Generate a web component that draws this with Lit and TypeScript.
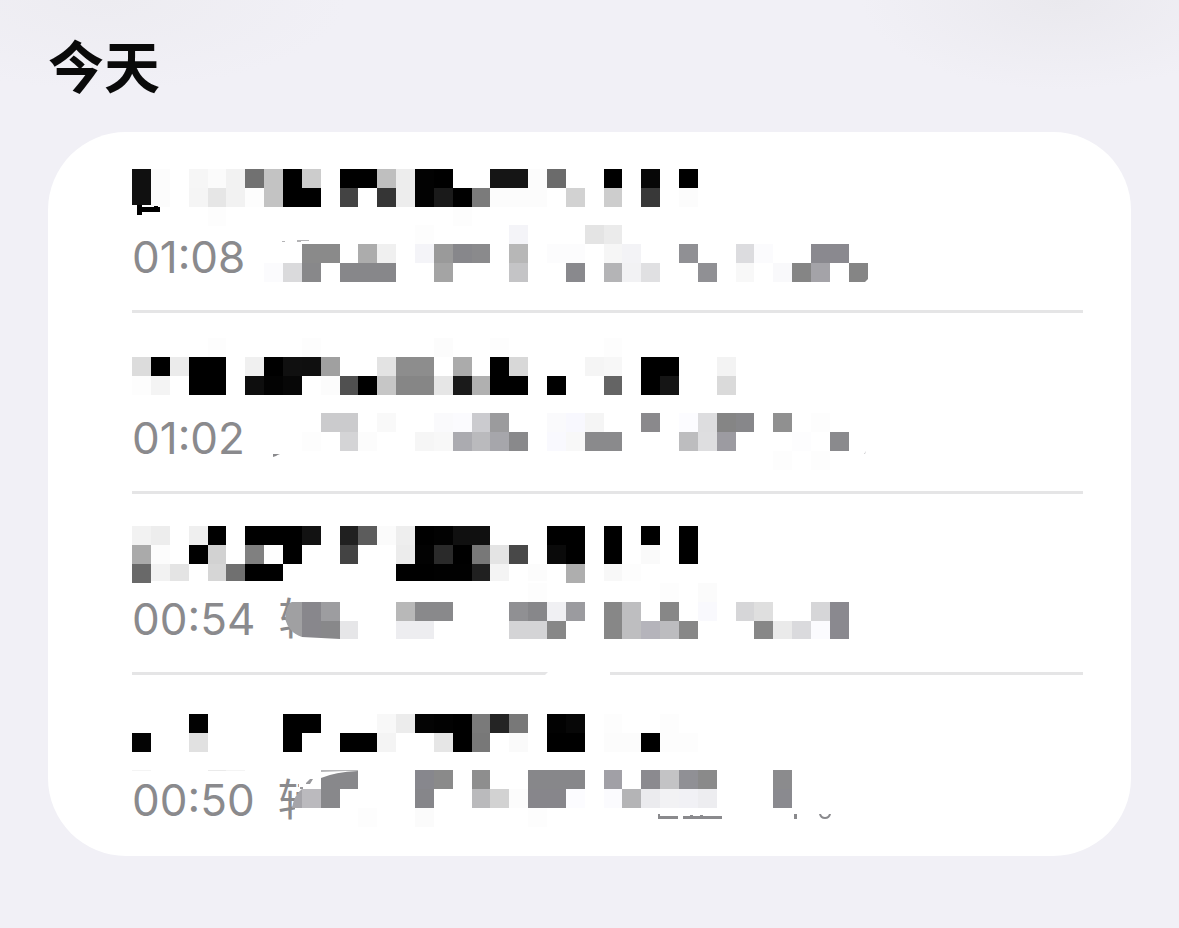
import { LitElement, html, svg, css } from "lit";
import { customElement, property } from "lit/decorators.js";

/** One horizontal strip of pixelated cells: "column:colour", or "first-last:colour". */
interface Band {
  y: number;
  h?: number;
  cells: string;
}

interface Shape {
  d: string;
  fill: string;
}

interface Entry {
  time: string;
  source?: string;
  bands: Band[];
  under?: Shape[];
  over?: Shape[];
}

const GREY = "#8a8a8d";

const entries: Entry[] = [
  {
    time: "01:08",
    bands: [
      { y: 37, cells: "0:10 1:fc 3:f6 4:fb 5:f2 6:71 7:c3 8:00 9:cc 11-12:00 13:bf 14:ed 15:02 16:00 19-20:15 21:fc 22:6b 25:00 27:07 29:00" },
      { y: 56, cells: "0:10 1:fc 3:f5 4:e6 5:f2 6:fd 7:c3 8-9:00 11:43 13:35 14:ed 15:02 16:1a 17:00 18:7b 19-21:fc 23:d2 25:cd 27:38 29:fc" },
      { y: 75, cells: "4:fd 17:fd" },
      { y: 93, cells: "15:fd 20:f4f4f8 24:e4 25:eb" },
      { y: 112, cells: "9-10:8a 12:ac 13:f0 15:f4f4f8 16:9a 17:87878b 18:8a8a8c 20:b7 22-23:fcfcfd 25:f6 26:f3f3f6 29:909094 32:dcdcdf 33:fbfbfd 36-37:8a898f" },
      { y: 131, cells: "7:fbfbfd 8:dadadc 9:88888a 11-13:87878a 16:a4 20:c4c4c6 23:89898d 25:b4b4b6 26:f2f2f4 27:e0e0e2 30:909094 32:f8 34:f9f9fb 35:85 36:a4a3a8 38:85" },
    ],
    over: [
      { d: "M0 73h5v2h-5zM10 73h9v2h-9z", fill: "#fff" },
      { d: "M5 73h5v2h12v-1h4v1h2v5h-18v3h-5z", fill: "#000" },
      { d: "M150 109h3v1h-3zM165 108h12v1h-8v1h-4z", fill: "#b4b4b6" },
      { d: "M736 147v3h-3z", fill: "#fff" },
    ],
  },
  {
    time: "01:02",
    bands: [
      { y: 25, cells: "4:fd 9:fd 16:fc 19:fd 25:fd" },
      { y: 44, cells: "0:dc 1:00 2:eb 3-4:00 6:f0 7:00 8:10 9:0f 10:a0 13:e3 14-15:8d 17:ab 19:00 20:d8 24:f5 25:f7 27-28:00 31:f3" },
      { y: 63, cells: "0:fd 1:f4 3-4:00 6:0e 7:03 8:07 10:fc 11:50 12:00 13:c6 14-15:86 16:e6 17:1a 18:b0 19-20:00 22:00 25:64 27:00 28:15 31:da" },
      { y: 100, cells: "10-11:cbcbcd 13:f9 16:fafafc 17:fbfbfe 18:cbcbcf 19:9b9b9d 22:fafafc 23:f8f8fe 24:f5 27:8a898c 29:fcfcff 30:dddddf 31:85 32:87878a 34:90 36:fd" },
      { y: 119, cells: "9:fd 11:d4d4d6 12:fc 15:f6 16:f8 17:ababb0 18:bababd 19:a6a6ab 20:89898b 22:f9f9fe 23:f8 24-25:8a8a8c 29:bdbdbf 30:dedee0 31:9c9ba1 35:fdfdfe 37:8a8a8d" },
      { y: 138, cells: "34:fd 36:fd" },
    ],
    over: [
      { d: "M141 141h7q-3 1 -4 2l-3 1z", fill: GREY },
      { d: "M734 138l-1 3h-1z", fill: "#c0c0c2" },
    ],
  },
  {
    time: "00:54",
    source: "转",
    bands: [
      { y: 32, cells: "0:f2 1:ed 3:ef 4:00 6-8:00 9:12 11:20 12:5c 13:fb 14:ee 15:00 16:02 17-18:10 22-23:00 25:00 27:00 29:00" },
      { y: 51, cells: "0:aa 1:fc 3:00 4:d2 6:80 7:fe 8:00 11:43 14:ec 15:02 16:2a 17:00 18:78 19:e4 20:48 22:0a 23:00 25:00 27:fa 29:00" },
      { y: 70, h: 17, cells: "0:69 1:f2 2:e4 4:d6 5:70 6-7:00 14-15:00 16-17:01 18:20 19:f4 21:fc 23:ae 25:f8 26:fd" },
      { y: 87, h: 2, cells: "0:69 23:ae" },
      { y: 89, cells: "21:fd 28:fd 30:fb" },
      { y: 108, cells: "14:b8 15-16:89898b 20:909093 21:87878a 22:f0f0f3 23:9b9b9f 25:87 26:bebec0 28:87 30:f9f9fd 32:d6d6d8 33:df 36:d6d6d8 37:8a898f" },
      { y: 127, h: 18, cells: "11:e6e6e8 14-15:ededf0 20-21:d4d4d6 22:87 25:87 26:bebec0 27:b5b4bb 28:bcbcbf 29:87 33:87 34:ea 35:dadadd 36:fbfbfe 37:8a898f" },
    ],
    under: [
      { d: "M161 92h60v60h-60z", fill: "#fff" },
    ],
    over: [
      { d: "M160 108L170 108V143Q162 140 159 136Q150 126 155 115Q157 108 160 108z", fill: "#a0a0a2" },
      { d: "M170 108h19v36l-19 -1z", fill: "#88878c" },
      { d: "M189 108h19v19h-19z", fill: "#9d9da0" },
      { d: "M189 127h19v18l-19 -1z", fill: "#88888a" },
      { d: "M416 178H478V182H412z", fill: "#fff" },
    ],
  },
  {
    time: "00:50",
    source: "转",
    bands: [
      { y: 39, cells: "3:02 8-9:00 13:f8 14:ec 15:04 16:02 17:00 18:7a 19:24 20:78 22:02 23:07 25:fd 28:fd" },
      { y: 58, cells: "0:04 3:e1 8:00 11-12:00 13:f4 16:e6 17:00 18:78 20:fa 22-23:00 25-26:fc 27:00 28-29:fd" },
      { y: 95, h: 1, cells: "0:f4 4:ea 5:f4" },
      { y: 95, cells: "15:87878d 16:8a 18:8e 21-23:87878a 25:a1a0a6 27:8b8a8f 28:c3c3c5 29:909095 30:8a 34:8b8b8d" },
      { y: 114, cells: "15:86868a 18:bababc 19:d2 20:fc 21-22:87868b 23:fcfcff 25:fbfbfe 26:b4b4b6 27:ebebee 28:f2f2f4 29:f1f1f5 30:ededf0 34:8a8a8f" },
      { y: 133, cells: "12:fd 15:fb 21:fd" },
    ],
    under: [
      { d: "M167 98h50v54h-54v-24l4 -10z", fill: "#fff" },
    ],
    over: [
      { d: "M174 108l4 -4h3l-3 5h-4zM168 112h3v2h-3z", fill: "#98989b" },
      { d: "M170 114v19h-10Q162 120 170 114z", fill: "#a5a4a9" },
      { d: "M170 114h19v19h-19z", fill: "#bbbabe" },
      { d: "M189 103Q203 97 226 96V114H208V133H189z", fill: "#88888b" },
      { d: "M189 95h37v1h-12l-25 1z", fill: "#b6b6b8" },
      { d: "M526 139h2v2h18v3h-20zM551 141h7v-1h3v1h7v-1h3v1h19v3h-39zM662 139h3v5h-3z", fill: GREY },
      { d: "M687 139h2q1 3 4 3t4 -3h2q-1 5 -6 5t-6 -5z", fill: GREY },
    ],
  },
];

/** Left edge of a mosaic column: seven columns span 132 pixels. */
const column = (c: number) => Math.round((c * 132) / 7 + 0.1);

@customElement("recording-row")
class RecordingRow extends LitElement {
  @property({ attribute: false }) entry!: Entry;

  static styles = css`
    :host {
      display: block;
      position: relative;
    }
    .line {
      display: flex;
      align-items: center;
      gap: 23px;
      padding: 98px 0 26px;
      font-size: 44px;
      line-height: 54px;
      color: #8a8a8d;
    }
    .mosaic {
      position: absolute;
      top: 0;
      left: 0;
      overflow: visible;
      pointer-events: none;
    }
  `;

  private band(b: Band) {
    return b.cells.split(" ").map((cell) => {
      const [range, tone] = cell.split(":");
      const [first, last = first] = range.split("-");
      const x = column(+first);
      const fill = "#" + (tone.length === 2 ? tone.repeat(3) : tone);
      return svg`<rect x=${x} y=${b.y} width=${column(+last + 1) - x} height=${b.h ?? 19} fill=${fill}></rect>`;
    });
  }

  render() {
    const { time, source, bands, under = [], over = [] } = this.entry;
    const shape = (s: Shape) => svg`<path d=${s.d} fill=${s.fill}></path>`;
    return html`
      <div class="line">
        <time>${time}</time>
        ${source ? html`<span>${source}</span>` : ""}
      </div>
      <svg class="mosaic" width="760" height="181" viewBox="0 0 760 181" aria-hidden="true">
        ${under.map(shape)}${bands.map((b) => this.band(b))}${over.map(shape)}
      </svg>
    `;
  }
}

@customElement("app-root")
class AppRoot extends LitElement {
  static styles = css`
    :host {
      display: block;
      box-sizing: border-box;
      min-height: 100vh;
      padding: 28px 48px 72px;
      background:
        radial-gradient(200px 90px at 90% 0, #eae9ee, transparent),
        radial-gradient(240px 90px at 9% 0, #edecf1, transparent),
        #f1f0f6;
      font-family: Inter, "Noto Sans CJK SC", sans-serif;
    }
    .heading {
      margin: 0 0 24px;
      font-size: 56px;
      line-height: 80px;
      font-weight: 700;
      color: #0a0a0a;
    }
    .card {
      margin: 0;
      padding: 0 48px 0 84px;
      list-style: none;
      background: #fff;
      border-radius: 78px;
    }
    .item {
      border-bottom: 3px solid #e5e5e6;
    }
    .item:last-child {
      border-bottom-color: transparent;
    }
  `;

  render() {
    return html`
      <h1 class="heading">今天</h1>
      <ul class="card">
        ${entries.map((e) => html`<li class="item"><recording-row .entry=${e}></recording-row></li>`)}
      </ul>
    `;
  }
}
